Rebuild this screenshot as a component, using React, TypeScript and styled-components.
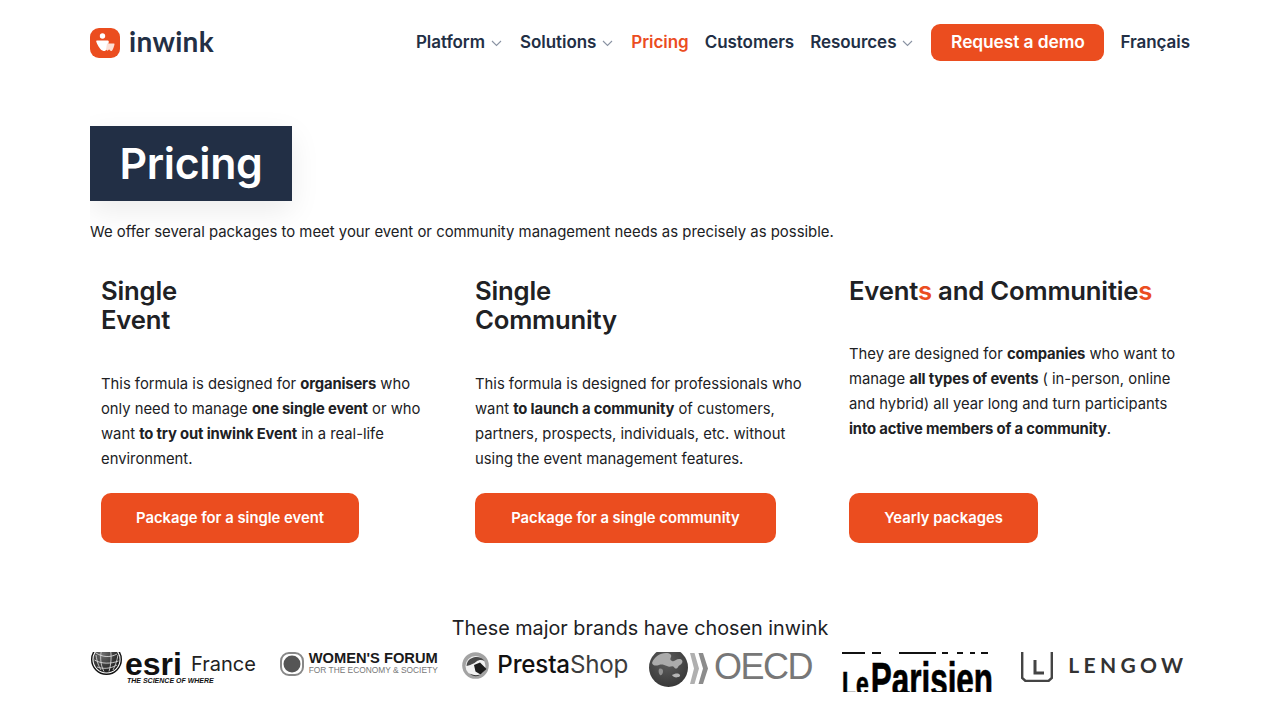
import React from "react";
import styled, { createGlobalStyle } from "styled-components";

const Global = createGlobalStyle`
  html, body { margin: 0; padding: 0; background: #fff; overflow: hidden; }
  body { font-family: Inter, "Liberation Sans", sans-serif; color: #202124; }
`;
const Page = styled.div`
  width: 1100px; height: 720px; margin: 0 auto; overflow: hidden;
`;
const Header = styled.header`
  height: 85px; display: flex; align-items: center; justify-content: space-between;
`;
const Brand = styled.div`
  display: flex; align-items: center; gap: 9px;
`;
const BrandName = styled.span`
  font-family: Lato, sans-serif; font-size: 28px; font-weight: 700; color: #222f45; letter-spacing: 0.3px; line-height: 28px; padding-bottom: 3px;
`;
const Nav = styled.nav`
  display: flex; align-items: center; gap: 16px;
`;
const NavItem = styled.a<{ $active?: boolean }>`
  display: flex; align-items: center; gap: 6px; padding-bottom: 1px;
  font-size: 17px; font-weight: 600; letter-spacing: -0.05px; white-space: nowrap;
  color: ${(p) => (p.$active ? "#eb4d1f" : "#222f45")};
`;
const DemoButton = styled.a`
  height: 37px; width: 173px; box-sizing: border-box; padding-bottom: 2px; display: flex; align-items: center; justify-content: center;
  background: #eb4d1f; color: #fff; border-radius: 9px;
  font-size: 17.4px; font-weight: 600; letter-spacing: -0.1px;
`;
const ChevronBox = styled.svg`
  flex: none; margin-right: 2px; margin-top: 2px;
`;
const Title = styled.h1`
  margin: 41px 0 0; width: 202px; height: 75px; display: flex; align-items: center; justify-content: center;
  background: #222f45; color: #fff; font-size: 42.8px; font-weight: 600; letter-spacing: -0.3px; box-sizing: border-box;
  box-shadow: 0 10px 30px rgba(0, 0, 0, 0.08);
`;
const Intro = styled.p`
  margin: 21px 0 0; font-size: 14.9px; line-height: 20px; color: #202124; white-space: nowrap;
`;
const Columns = styled.div`
  display: grid; grid-template-columns: repeat(3, 352px); gap: 22px; margin-top: 23px;
`;
const Column = styled.section`
  padding: 11px; height: 267px; display: flex; flex-direction: column;
`;
const Heading = styled.h2`
  margin: 0; font-size: 25.7px; line-height: 29px; font-weight: 600; color: #202124; letter-spacing: -0.2px; white-space: nowrap;
`;
const Accent = styled.span`
  color: #eb4d1f;
`;
const Body = styled.p<{ $top: number }>`
  margin: ${(p) => p.$top}px 0 0; font-size: 14.8px; line-height: 25px; color: #202124; white-space: nowrap;
  strong { font-weight: 700; letter-spacing: -0.15px; }
`;
const Cta = styled.a<{ $w: number }>`
  margin-top: auto; width: ${(p) => p.$w}px; height: 50px; box-sizing: border-box; flex: none;
  display: flex; align-items: center; justify-content: center;
  background: #eb4d1f; color: #fff; border-radius: 10px; font-size: 14.8px; font-weight: 600;
`;
const BrandsTitle = styled.p`
  margin: 59px 0 0; text-align: center; font-size: 19.8px; line-height: 30px; color: #202124; font-weight: 400;
`;
const Logos = styled.div`
  height: 40px; margin-top: 9px; display: grid; grid-template-columns: repeat(6, 1fr); gap: 20px;
`;
const Logo = styled.div<{ $shift: number }>`
  height: 40px; display: flex; align-items: flex-start; margin-left: ${(p) => p.$shift}px;
`;
const EsriCol = styled.div`
  display: flex; flex-direction: column; margin-left: 3px; width: 131px; flex: none;
`;
const EsriTop = styled.div`
  display: flex; align-items: center; height: 25px; flex: none;
`;
const EsriWord = styled.span`
  font-family: "Liberation Sans", sans-serif; font-weight: 700; font-size: 32px; line-height: 25px; color: #111; letter-spacing: 0;
`;
const EsriFrance = styled.span`
  font-family: Inter, sans-serif; font-size: 20px; line-height: 25px; color: #222; margin-left: 9px;
`;
const EsriTag = styled.span`
  font-family: "Liberation Sans", sans-serif; font-size: 7px; font-weight: 700; font-style: italic; color: #111; line-height: 8px; white-space: nowrap; margin-left: 2px;
`;
const ForumCol = styled.div`
  display: flex; flex-direction: column; margin-left: 5px; flex: none;
`;
const ForumTop = styled.span`
  font-family: "Liberation Sans", sans-serif; font-weight: 700; font-size: 14.7px; line-height: 13px; color: #1a1a1a; white-space: nowrap;
`;
const ForumSub = styled.span`
  font-family: "Liberation Sans", sans-serif; font-size: 8.400px; line-height: 9px; margin-top: 1px; color: #777; white-space: nowrap;
`;
const Presta = styled.span`
  font-family: Inter, sans-serif; font-size: 24.200px; line-height: 25px; color: #111; font-weight: 500; white-space: nowrap; letter-spacing: -0.2px; margin-left: 8px; flex: none;
  em { font-style: normal; color: #3d3d3d; font-weight: 400; }
`;
const Oecd = styled.span`
  font-family: "Liberation Sans", sans-serif; font-size: 36px; line-height: 30px; color: #777; letter-spacing: -1.5px; margin-left: 6px; flex: none;
`;
const ParisienCol = styled.div`
  width: 151px; display: flex; flex-direction: column; height: 40px; overflow: hidden; flex: none;
`;
const ParisienRule = styled.div`
  height: 2px; width: 100%; flex: none; background: linear-gradient(90deg, #111 0 15%, transparent 15% 20%, #111 20% 26%, transparent 26% 38%, #111 38% 62%, transparent 62% 66%, #111 66% 70%, transparent 70% 76%, #111 76% 80%, transparent 80% 85%, #111 85% 88%, transparent 88% 92%, #111 92% 97%, transparent 97%);
`;
const ParisienLine = styled.div`
  display: flex; align-items: baseline; margin-top: 2px; transform: scaleX(0.655); transform-origin: left top; width: 232px; flex: none; white-space: nowrap;
  font-family: "Liberation Sans", sans-serif; font-weight: 700; color: #000; line-height: 48px; -webkit-text-stroke: 0.7px #000;
`;
const ParisienLe = styled.span`
  font-size: 35px; margin-right: 3px;
`;
const ParisienName = styled.span`
  font-size: 48px;
`;
const Lengow = styled.span`
  font-family: Lato, sans-serif; font-weight: 700; font-size: 21px; line-height: 26px; letter-spacing: 4.300px; color: #333; margin-left: 15px; flex: none;
`;
const LogoIcon = styled.svg<{ $nudge?: number; $left?: number }>`
  flex: none; margin-top: ${(p) => p.$nudge ?? 0}px; margin-left: ${(p) => p.$left ?? 0}px;
`;

const Chevron = () => (
  <ChevronBox width="11" height="7" viewBox="0 0 11 7" fill="none" stroke="#8a93a3" strokeWidth="1.1">
    <path d="M1 1l4.500 4.500L10 1" />
  </ChevronBox>
);

const LogoMark = () => (
  <svg width="30" height="30" viewBox="0 0 30 30">
    <rect width="30" height="30" rx="9" fill="#eb4d1f" />
    <circle cx="12.500" cy="8" r="2.700" fill="#fff" />
    <path d="M7 12.500h10.500c.8 0 1.500.7 1.300 1.500l-1.800 6.500c-.5 1.800-2 2.800-3.500 2.500-2.900-.6-5.500-4.800-7.200-9.200-.3-.6.100-1.300.7-1.300z" fill="#fff" />
    <path d="M17 15.500h7c.4 0 .6.300.5.700-.6 3-1.900 6.800-3.400 6.800-1.100 0-1.300-1.400-2-1.400-.7 0-1 1.300-1.800 1l-1.300-.8z" fill="#fde0d6" />
  </svg>
);

const EsriGlobe = () => (
  <LogoIcon width="31" height="23" viewBox="0 8 31 23">
    <defs>
      <radialGradient id="esriShade" cx="0.35" cy="0.3" r="0.8">
        <stop offset="0" stopColor="#6e6e6e" />
        <stop offset="1" stopColor="#111" />
      </radialGradient>
    </defs>
    <circle cx="15.500" cy="15.500" r="14.800" fill="none" stroke="#111" strokeWidth="1.400" />
    <circle cx="15.500" cy="15.500" r="13" fill="url(#esriShade)" />
    <g fill="none" stroke="#e6e6e6" strokeWidth="0.800">
      <path d="M5 9c6 4 14 5 21 1M3.500 16c7 4 16 4 24 1M6 23c6 2 13 2 20-2" />
      <path d="M11 3.500c-2 8-2 17 2 24M19 3.500c2 8 1 17-1 24M5 11c1 7 3 12 5 15M27 11c-1 6-3 11-5 15" />
    </g>
  </LogoIcon>
);

const PrestaBird = () => (
  <LogoIcon width="27" height="27" viewBox="0 0 27 27">
    <circle cx="13.500" cy="13.500" r="13.300" fill="#a3a3a3" />
    <circle cx="13.500" cy="14" r="10" fill="#f2f2f2" />
    <path d="M4.500 14C5 7.500 10 5 15 5c3 0 6 1.500 7.500 4-3-1.500-6-1-8 .5-2 1.500-4 3-10 4.500z" fill="#4a4a4a" />
    <path d="M12 13l6-2.500 6.500 6.500-6 5.500-5-3z" fill="#1c1c1c" />
    <path d="M7 21c3 2 7 3 11 1.500-1 2-7 3-11-1.500z" fill="#333" />
  </LogoIcon>
);

const OecdGlobe = () => (
  <LogoIcon width="39" height="35" viewBox="0 4 39 35">
    <defs>
      <radialGradient id="oecdShade" cx="0.45" cy="0.35" r="0.75">
        <stop offset="0" stopColor="#5e5e5e" />
        <stop offset="1" stopColor="#333" />
      </radialGradient>
    </defs>
    <circle cx="19.500" cy="19.500" r="19.500" fill="url(#oecdShade)" />
    <path d="M3 15c2-6 8-10 14-10 4 0 6 2 5 4-1 2-1 3 1 4 3 1 4-2 7-2 3 0 4 2 3 4-1 2-3 2-4 4-1 2-3 2-4 0-2-2-4 1-7-1-3-1-5-2-8-1-3 1-6 1-7-2z" fill="#ababab" />
    <path d="M23 27c2-1 5-2 7-1 2 1 1 3-1 3-2 1-5 0-6-2z" fill="#b5b5b5" />
    <path d="M10 21c2-1 4 0 4 2s-1 5-3 4c-1-1-2-4-1-6z" fill="#8f8f8f" />
  </LogoIcon>
);

const OecdChevrons = () => (
  <LogoIcon $nudge={1} $left={2} width="18" height="31" viewBox="0 0 18 31">
    <path d="M0 0h4.500l4.500 15.500L4.500 31H0l4-15.500z" fill="#b0b0b0" />
    <path d="M8.500 0H13l5 15.500L13 31H8.500l4.500-15.500z" fill="#8c8c8c" />
  </LogoIcon>
);

export default function App() {
  return (
    <Page>
      <Global />
      <Header>
        <Brand>
          <LogoMark />
          <BrandName>inwink</BrandName>
        </Brand>
        <Nav>
          <NavItem>Platform<Chevron /></NavItem>
          <NavItem>Solutions<Chevron /></NavItem>
          <NavItem $active>Pricing</NavItem>
          <NavItem>Customers</NavItem>
          <NavItem>Resources<Chevron /></NavItem>
          <DemoButton>Request a demo</DemoButton>
          <NavItem>Français</NavItem>
        </Nav>
      </Header>
      <Title>Pricing</Title>
      <Intro>We offer several packages to meet your event or community management needs as precisely as possible.</Intro>
      <Columns>
        <Column>
          <Heading>Single<br />Event</Heading>
          <Body $top={38}>
            This formula is designed for <strong>organisers</strong> who<br />
            only need to manage <strong>one single event</strong> or who<br />
            want <strong>to try out inwink Event</strong> in a real-life<br />
            environment.
          </Body>
          <Cta $w={258}>Package for a single event</Cta>
        </Column>
        <Column>
          <Heading>Single<br />Community</Heading>
          <Body $top={38}>
            This formula is designed for professionals who<br />
            want <strong>to launch a community</strong> of customers,<br />
            partners, prospects, individuals, etc. without<br />
            using the event management features.
          </Body>
          <Cta $w={301}>Package for a single community</Cta>
        </Column>
        <Column>
          <Heading>Event<Accent>s</Accent> and Communitie<Accent>s</Accent></Heading>
          <Body $top={37}>
            They are designed for <strong>companies</strong> who want to<br />
            manage <strong>all types of events</strong> ( in-person, online<br />
            and hybrid) all year long and turn participants<br />
            <strong>into active members of a community</strong>.
          </Body>
          <Cta $w={189}>Yearly packages</Cta>
        </Column>
      </Columns>
      <BrandsTitle>These major brands have chosen inwink</BrandsTitle>
      <Logos>
        <Logo $shift={1}>
          <EsriGlobe />
          <EsriCol>
            <EsriTop>
              <EsriWord>esri</EsriWord>
              <EsriFrance>France</EsriFrance>
            </EsriTop>
            <EsriTag>THE SCIENCE OF WHERE</EsriTag>
          </EsriCol>
        </Logo>
        <Logo $shift={3}>
          <LogoIcon width="24" height="24" viewBox="0 0 24 24">
            <rect x="1" y="1" width="22" height="22" rx="8" fill="none" stroke="#888" strokeWidth="2" />
            <circle cx="12" cy="12" r="8.500" fill="#555" />
          </LogoIcon>
          <ForumCol>
            <ForumTop>WOMEN'S FORUM</ForumTop>
            <ForumSub>FOR THE ECONOMY &amp; SOCIETY</ForumSub>
          </ForumCol>
        </Logo>
        <Logo $shift={-1}>
          <PrestaBird />
          <Presta>Presta<em>Shop</em></Presta>
        </Logo>
        <Logo $shift={-1}>
          <OecdGlobe />
          <OecdChevrons />
          <Oecd>OECD</Oecd>
        </Logo>
        <Logo $shift={5}>
          <ParisienCol>
            <ParisienRule />
            <ParisienLine>
              <ParisienLe>Le</ParisienLe>
              <ParisienName>Parisien</ParisienName>
            </ParisienLine>
          </ParisienCol>
        </Logo>
        <Logo $shift={-2}>
          <LogoIcon width="32" height="30" viewBox="0 0 32 30" fill="none" stroke="#444" strokeWidth="2.400">
            <path d="M1.200 0v26l3.300 3h23l3.300-3V0" />
            <path d="M14 8v13h9" strokeWidth="3" />
          </LogoIcon>
          <Lengow>LENGOW</Lengow>
        </Logo>
      </Logos>
    </Page>
  );
}
